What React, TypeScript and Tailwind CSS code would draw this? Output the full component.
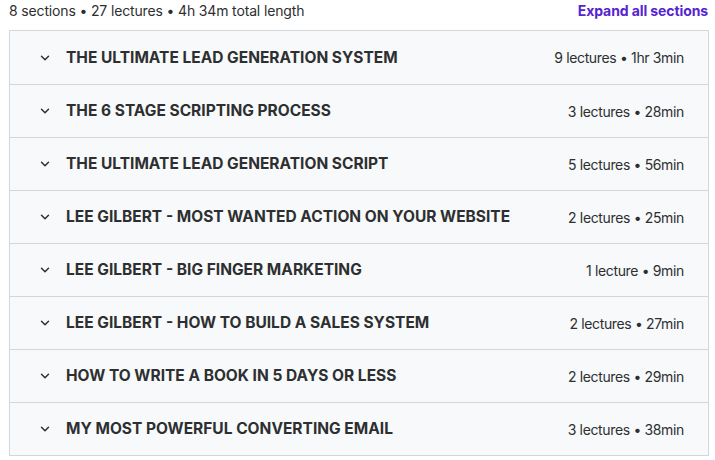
import { ChevronDown } from "lucide-react"

const sections = [
    { title: "THE ULTIMATE LEAD GENERATION SYSTEM", meta: "9 lectures • 1hr 3min" },
    { title: "THE 6 STAGE SCRIPTING PROCESS", meta: "3 lectures • 28min" },
    { title: "THE ULTIMATE LEAD GENERATION SCRIPT", meta: "5 lectures • 56min" },
    { title: "LEE GILBERT - MOST WANTED ACTION ON YOUR WEBSITE", meta: "2 lectures • 25min" },
    { title: "LEE GILBERT - BIG FINGER MARKETING", meta: "1 lecture • 9min" },
    { title: "LEE GILBERT - HOW TO BUILD A SALES SYSTEM", meta: "2 lectures • 27min" },
    { title: "HOW TO WRITE A BOOK IN 5 DAYS OR LESS", meta: "2 lectures • 29min" },
    { title: "MY MOST POWERFUL CONVERTING EMAIL", meta: "3 lectures • 38min" },
]

export default function App() {
    return (
        <div className="w-[715px] h-[460px] overflow-hidden bg-white font-['Inter',sans-serif] text-[#2d2f31]">
            <div className="flex items-center justify-between pl-[9px] pr-[7px] h-[20px]">
                <span className="text-[14px] tracking-[-0.15px]">8 sections • 27 lectures • 4h 34m total length</span>
                <button className="text-[14px] font-bold text-[#5624d0] tracking-[-0.1px]">Expand all sections</button>
            </div>

            <div className="mt-[10px] ml-[9px] w-[700px] border border-[#d1d7dc]">
                {sections.map((s, i) => (
                    <div
                        key={i}
                        className={`flex items-center bg-[#f7f9fa] pl-[28px] pr-[24px] ${i > 0 ? "h-[53px] border-t border-[#d1d7dc]" : "h-[53px]"}`}
                    >
                        <ChevronDown className="w-[14px] h-[14px] text-[#2d2f31] shrink-0" strokeWidth={2.5} />
                        <span className="ml-[14px] flex-1 text-[15.5px] font-bold tracking-[0px]">{s.title}</span>
                        <span className="text-[14px] tracking-[-0.35px]">{s.meta}</span>
                    </div>
                ))}
            </div>
        </div>
    )
}
